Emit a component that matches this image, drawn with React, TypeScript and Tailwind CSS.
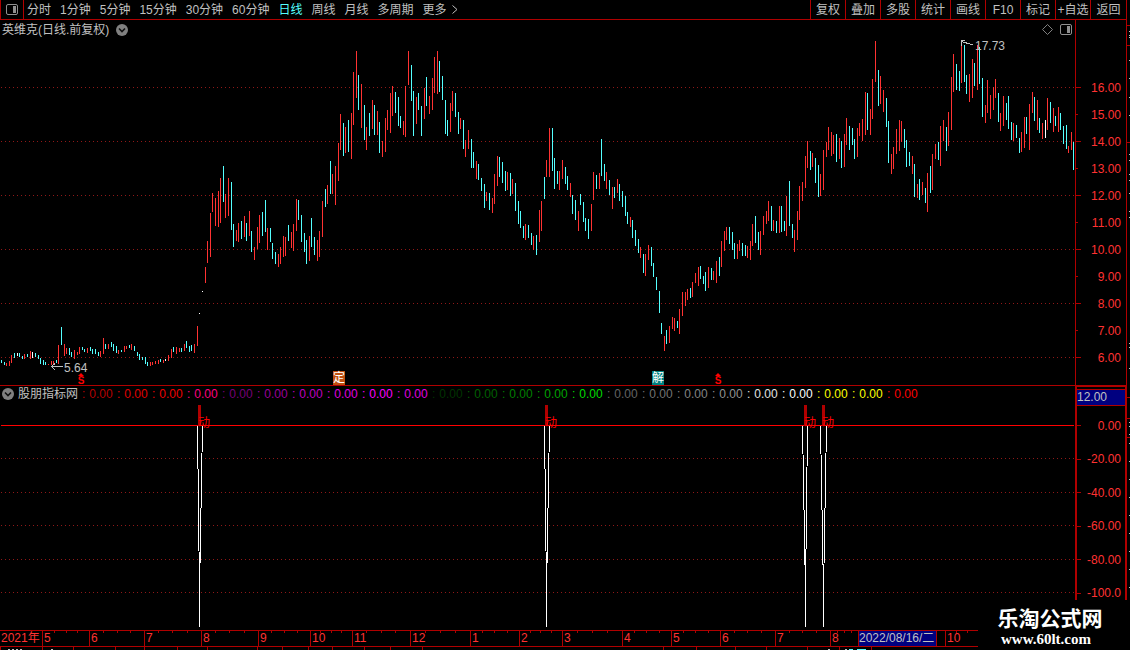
const periods = ['分时', '1分钟', '5分钟', '15分钟', '30分钟', '60分钟', '日线', '周线', '月线', '多周期', '更多']
const actions = ['复权', '叠加', '多股', '统计', '画线', 'F10', '标记', '+自选', '返回']

// x, kind (r = up, c = down, w = flat), high-low in canvas units
const bars = `
1c360-363 4c362-365 6r363-366 9r361-366 11r355-363 14c353-358 17w353-356 19c353-357 22c356-359 24r354-359
27c354-357 30r351-359 32w352-358 35c353-357 38c355-359 40c358-364 43c360-365 45c362-365 48r364-365 51r361-365
53r361-365 56c360-363 58r345-364 61c327-345 64r344-356 66r348-354 69c348-355 71c352-357 74r350-359 77r352-355
79r347-354 82c347-350 84c349-352 87r348-353 90c347-351 92c349-354 95c349-354 98c352-356 100r351-357 103r338-354
105c344-349 108r344-349 111c342-347 113c344-351 116c346-353 118r350-354 121c350-352 124r346-352 126r346-349
129c345-348 131r344-350 134c346-351 137c352-356 139c354-360 142c357-360 145c357-364 147c362-366 150r362-366
152r362-365 155r361-364 158r360-364 160c359-362 163r360-363 165w359-361 168r355-361 171r349-358 173c347-352
176r347-354 179r348-352 181c348-352 184r344-351 186c341-348 189c346-352 191c345-351 194r344-353 197r326-346
199w313-314 202w291-292 205r267-283 207r241-263 210r213-257 212r193-212 215r198-226 218r191-227 220r178-223
223c166-202 225r194-218 228r178-216 231c182-230 233c224-247 236r230-241 238r223-242 241c221-239 244r216-237
246c223-241 249r211-236 251c231-252 254r247-260 257r227-249 259r215-243 262c212-236 265c200-232 267r228-250
270c228-242 272c243-259 275c252-264 278r254-267 280r247-264 283r236-257 285r237-256 288c225-241 291r232-248
293r224-251 296r199-231 298c200-220 301c215-242 304c233-252 306c240-264 309r236-261 311c218-247 314c237-255
317r240-261 319r231-257 322r201-237 325c189-207 327r185-204 330c161-194 332r174-194 335r166-205 338r143-181
340r114-150 343c123-156 345r127-153 348c120-152 351r113-159 353r72-125 356r51-98 358c75-110 361r84-128
364c105-140 366r127-150 369c113-136 372r100-129 374c105-135 377r111-135 379c122-153 382r141-157 385r118-152
387r110-130 390r93-133 392r86-116 395c92-113 398c97-126 400c116-128 403r121-135 405r86-137 408r51-85
411c65-101 413c91-136 416r97-124 418c93-110 421c106-136 424r88-119 426c77-106 429r96-114 432r78-110
434r57-93 437r51-94 439c61-92 442c76-100 445c100-134 447c120-136 450r103-132 452r91-111 455c93-117
458c112-134 460r118-129 463c120-149 465r140-157 468r130-149 471c139-168 473c152-168 476r161-179 478c164-180
481c178-191 484c184-208 486r192-201 489c193-210 492r198-213 494r174-204 497r156-186 499c157-177 502c162-183
505c171-191 507r172-190 510c173-196 512r179-194 515c183-211 518c201-224 520c211-228 523c226-238 525r224-240
528c225-238 531c233-245 533r236-250 536c235-255 539r210-242 541r201-231 544c177-199 546r160-177 549r128-177
552c128-171 554c158-189 557c171-184 559r171-190 562r160-179 565c167-184 567c176-190 570r183-197 572c195-214
575c200-220 578r211-231 580c194-205 583c202-222 585c218-231 588c219-239 591r204-231 593r172-200 596c175-189
599r173-189 601c139-176 604c164-181 606r172-189 609c180-195 612r187-209 614c187-198 617r179-193 619c184-201
622c191-207 625c196-216 627c212-224 630r217-227 632c220-238 635c230-246 638c239-253 640r247-258 643c254-273
645r254-276 648r245-260 651c247-266 653c263-277 656c277-290 659c291-313 661c323-334 664r336-351 666c330-344
669r326-343 672r317-329 674r318-331 677c321-328 679r309-334 682r292-316 685r292-306 687r289-300 690c288-298
692r282-297 695r273-283 698r267-286 700c266-279 703c276-284 705c272-291 708r267-288 711c268-280 713r271-280
716r261-283 719c257-276 721r241-267 724r231-251 726r227-240 729c227-244 732c232-250 734c243-259 737r244-259
739r240-251 742c243-256 745c245-256 747r246-258 750r241-260 752r224-246 755c216-243 758c232-250 760r231-255
763r216-235 766r211-224 768r201-221 771c206-231 773r220-231 776c221-233 779r206-233 781c206-232 784c221-231
786r196-236 789c181-226 792c224-238 794r230-252 797r211-240 799r186-220 802r182-201 805r156-188 807r141-168
810c151-170 812r153-167 815c158-183 818c165-197 820r174-196 823r150-190 826r142-157 828r127-150 831r132-156
833r135-154 836c134-162 839r138-159 841c141-168 844r134-167 846r118-145 849c126-150 852c128-145 854c139-159
857r128-157 859r123-136 862r119-141 865r92-135 867c93-130 870r109-135 872r79-119 875r41-82 878c70-106
880r76-104 883r90-112 886c98-127 888c121-163 891r154-174 893r147-169 896r129-154 899r120-151 901r121-142
904c129-148 906c140-167 909c152-166 912r156-174 914c164-197 917r184-198 919c179-200 922r182-195 925c188-203
927r173-212 930c166-193 932r154-190 935r144-159 938c142-160 940r126-166 943r120-141 946c127-151 948r112-146
951r77-130 953r54-92 956c64-90 959c71-91 961r41-83 964c45-82 966c75-94 969r74-102 972r59-98 974c63-86
977r45-90 979c47-84 982c78-117 985r105-123 987r80-113 990r95-119 993r87-110 995r79-98 998c93-122 1000r113-131
1003r96-126 1006c103-120 1008c96-129 1011c122-140 1013r123-141 1016c125-138 1019c138-153 1021r132-152
1024r117-148 1026c117-134 1029r104-150 1032r92-113 1034c97-121 1037r100-130 1039c118-133 1042r123-139
1045w120-138 1047r98-130 1050c102-123 1053r108-132 1055c116-126 1058r107-132 1060c113-130 1063c126-144
1066c125-149 1068r146-153 1071r132-150 1073c142-170`
  .trim()
  .split(/\s+/)
  .map((s) => {
    const [, x, kind, high, low] = s.match(/(\d+)([rcw])(\d+)-(\d+)/)!
    return { x: +x, kind, high: +high, low: +low }
  })

const barFill: Record<string, string> = { r: '#ff3232', c: '#54ffff', w: '#ffffff' }

const prices = ['16.00', '15.00', '14.00', '13.00', '12.00', '11.00', '10.00', '9.00', '8.00', '7.00', '6.00']
const levels = ['0.00', '-20.00', '-40.00', '-60.00', '-80.00', '-100.0']

const valueColors = [
  '#b80000', '#e00000', '#f00000', '#ff0080', '#780078', '#9c009c', '#c000c0', '#e000e0',
  '#ff00ff', '#e000e0', '#003400', '#006000', '#008000', '#00a400', '#00dc00', '#646464',
  '#747474', '#848484', '#949494', '#e4e4e4', '#ffffff', '#ffff00', '#ffff00', '#ff0000',
]

// left / right leg and tip of every spike
const signals = [
  { left: 197, right: 202, tip: 199 },
  { left: 544, right: 549, tip: 546 },
  { left: 802, right: 807, tip: 805 },
  { left: 820, right: 826, tip: 823 },
]

const months = [
  { label: '2021年', span: 42 },
  { label: '5', span: 47 },
  { label: '6', span: 55 },
  { label: '7', span: 57 },
  { label: '8', span: 57 },
  { label: '9', span: 52 },
  { label: '10', span: 42 },
  { label: '11', span: 58 },
  { label: '12', span: 60 },
  { label: '1', span: 49 },
  { label: '2', span: 43 },
  { label: '3', span: 60 },
  { label: '4', span: 49 },
  { label: '5', span: 49 },
  { label: '6', span: 55 },
  { label: '7', span: 55 },
  { label: '8', span: 28 },
  { label: '2022/08/16/二', span: 87 },
  { label: '10', span: 44 },
  { label: '', span: 137 },
]
const totalSpan = months.reduce((sum, m) => sum + m.span, 0)

const pos = (x: number, y: number, h: number) => ({
  left: `${(x / 1075) * 100}%`,
  top: `${(y / h) * 100}%`,
})

function PanelIcon() {
  return (
    <svg width="12" height="11" viewBox="0 0 12 11" fill="none">
      <rect x="0.5" y="0.5" width="11" height="10" rx="1.5" stroke="#909090" />
      <rect x="7" y="2" width="3" height="7" fill="#909090" />
    </svg>
  )
}

function RoundArrow() {
  return (
    <svg width="12" height="12" viewBox="0 0 12 12" fill="none">
      <circle cx="6" cy="6" r="6" fill="#808080" />
      <path d="M3 4.5 L6 7.5 L9 4.5" stroke="#101010" strokeWidth="1.6" />
    </svg>
  )
}

function SellMark({ x }: { x: number }) {
  return (
    <div className="absolute flex w-2 flex-col items-center" style={pos(x, 353, 365)}>
      <svg width="6" height="3" viewBox="0 0 6 3" fill="#ff0000">
        <path d="M3 0 L6 3 H0 Z" />
      </svg>
      <span className="text-[10px] leading-[9px] font-bold text-[#ff0000]">S</span>
    </div>
  )
}

function Toolbar() {
  return (
    <header className="flex h-5 shrink-0 border-b border-[#b00000]">
      <button aria-label="panel" className="flex w-6 shrink-0 items-center justify-center border-x border-[#b00000]">
        <PanelIcon />
      </button>
      <nav className="flex items-center gap-[9px] pl-[3px] whitespace-nowrap">
        {periods.map((p) => (
          <button key={p} className={p === '日线' ? 'text-[#54ffff]' : ''}>
            {p}
          </button>
        ))}
        <svg width="6" height="9" viewBox="0 0 6 9" fill="none" stroke="#c0c0c0" className="-ml-1">
          <path d="M0.5 0.5 L5 4.5 L0.5 8.5" />
        </svg>
      </nav>
      <div className="ml-auto flex whitespace-nowrap">
        {actions.map((a) => (
          <button key={a} className="w-[35px] border-l border-[#b00000] text-center last:w-9">
            {a}
          </button>
        ))}
      </div>
    </header>
  )
}

function PriceChart() {
  return (
    <section className="flex min-h-0 flex-[73]">
      <div className="relative min-w-0 flex-1">
        <svg
          className="absolute h-full w-full"
          viewBox="0 20 1075 365"
          preserveAspectRatio="none"
          shapeRendering="crispEdges"
        >
          {[87, 141, 195, 249, 303, 357].map((y) => (
            <line key={y} x1="1" x2="1075" y1={y + 0.5} y2={y + 0.5} stroke="#901818" strokeDasharray="1 3" />
          ))}
          {bars.map((b) => (
            <rect key={b.x} x={b.x} y={b.high} width="1" height={b.low - b.high} fill={barFill[b.kind]} />
          ))}
          <g stroke="#c0c0c0" fill="none">
            <path d="M51 366.5 H63 M51.5 366.5 L55 363.5 M51.5 366.5 L55 370" />
            <path d="M961.5 41.5 L973 45 M961.5 46 V40.5 H965" />
          </g>
        </svg>
        <div className="absolute top-0.5 left-0.5 flex items-center gap-[7px] leading-4">
          <h1>英维克(日线.前复权)</h1>
          <button aria-label="expand">
            <RoundArrow />
          </button>
        </div>
        <div className="absolute top-1 right-[3px] flex items-center gap-[7px]">
          <svg width="11" height="11" viewBox="0 0 11 11" fill="none" stroke="#808080">
            <path d="M5.5 0.5 L10.5 5.5 L5.5 10.5 L0.5 5.5 Z" />
          </svg>
          <PanelIcon />
        </div>
        <span className="absolute leading-3" style={pos(64, 342, 365)}>
          5.64
        </span>
        <span className="absolute leading-3" style={pos(975, 20, 365)}>
          17.73
        </span>
        <SellMark x={77} />
        <SellMark x={714} />
        <span className="absolute bg-[#c05010] leading-[14px] text-white" style={pos(333, 351, 365)}>
          定
        </span>
        <span className="absolute bg-[#008080] leading-[14px] text-white" style={pos(652, 351, 365)}>
          解
        </span>
      </div>
      <div className="flex w-[51px] shrink-0 flex-col border-l border-[#b00000] text-[#ff3232]">
        <div className="flex-[54]" />
        {prices.map((p, i) => (
          <div key={p} className="flex min-h-0 flex-[27] items-center justify-between pr-[5px]">
            <i className={i % 2 ? 'h-px w-0.5 bg-[#b00000]' : 'h-px w-[5px] bg-[#b00000]'} />
            {p}
          </div>
        ))}
        <div className="flex-[14]" />
      </div>
    </section>
  )
}

function IndicatorChart() {
  return (
    <section className="flex min-h-0 flex-[49]">
      <div className="relative min-w-0 flex-1 border-t border-[#b00000]">
        <svg
          className="absolute h-full w-full"
          viewBox="0 386 1075 244"
          preserveAspectRatio="none"
          shapeRendering="crispEdges"
        >
          {[458, 492, 525, 559, 592].map((y) => (
            <line key={y} x1="1" x2="1075" y1={y + 0.5} y2={y + 0.5} stroke="#901818" strokeDasharray="1 3" />
          ))}
          <rect x="1" y="425" width="1073" height="1" fill="#ff0000" />
          {signals.map((s) => (
            <g key={s.tip}>
              <rect x={s.tip - 1} y="405" width="3" height="21" fill="#b00000" />
              <path
                d={`M${s.left + 0.5} 426 L${s.tip + 0.5} 592 V627 M${s.right + 0.5} 426 L${s.tip + 0.5} 592`}
                stroke="#ffffff"
                fill="none"
              />
            </g>
          ))}
        </svg>
        {signals.map((s) => (
          <span key={s.tip} className="absolute leading-3 text-[#ff0000]" style={pos(s.tip - 1, 31, 244)}>
            动
          </span>
        ))}
        <div className="relative flex items-center pl-0.5 leading-4 whitespace-nowrap">
          <button aria-label="expand indicator">
            <RoundArrow />
          </button>
          <h2 className="w-[65px] shrink-0 pl-1">股朋指标网</h2>
          {valueColors.map((c, i) => (
            <span key={i} className="flex w-[35px] shrink-0 gap-1 pl-[3px]" style={{ color: c }}>
              <span>:</span>
              <span>0.00</span>
            </span>
          ))}
        </div>
      </div>
      <div className="flex w-[51px] shrink-0 flex-col border-t-2 border-r border-l-2 border-[#b00000] text-[#ff3232]">
        <div className="mt-0.5 mb-[3px] h-[17px] shrink-0 border-y border-[#b00000] bg-[#000080] leading-[15px] text-[#c0c0c0]">
          12.00
        </div>
        {levels.map((l) => (
          <div key={l} className="flex min-h-0 flex-[10] items-center justify-between pr-1">
            <i className="h-px w-1 bg-[#b00000]" />
            {l}
          </div>
        ))}
        <div className="flex-[6]" />
      </div>
    </section>
  )
}

function DateAxis() {
  return (
    <footer className="flex h-[17px] shrink-0 border-y border-[#b00000] leading-[15px] text-[#ff3232]">
      {months.map((m, i) => (
        <div
          key={i}
          className={
            m.label.length > 6
              ? 'shrink-0 border-l border-[#b00000] whitespace-nowrap text-[#c0c0c0]'
              : 'relative shrink-0 border-l border-[#b00000] whitespace-nowrap first:border-l-0'
          }
          style={{ width: `${(m.span / totalSpan) * 100}%` }}
        >
          <span className={m.label.length > 6 ? 'block w-[78px] border-r border-[#b00000] bg-[#000080]' : 'px-px'}>
            {m.label}
          </span>
          {m.label.length < 3 && m.label !== '' && (
            <div className="absolute inset-x-0 top-0 flex justify-evenly">
              <i className="h-0.5 w-px bg-[#b00000]" />
              <i className="h-0.5 w-px bg-[#b00000]" />
              <i className="h-0.5 w-px bg-[#b00000]" />
            </div>
          )}
        </div>
      ))}
    </footer>
  )
}

// clipped edges of the neighbouring windows
function BottomEdge() {
  const ticks = [0, 42, 73, 115, 144, 177, 207, 257, 282, 308, 332, 364, 390, 422, 663, 696, 735, 766, 807, 839, 871]
  return (
    <svg className="h-[3px] w-full shrink-0" viewBox="0 0 1126 3" preserveAspectRatio="none" shapeRendering="crispEdges">
      {ticks.map((x) => (
        <rect key={x} x={x} y="0" width="1" height="3" fill="#b00000" />
      ))}
      {[8, 12, 16, 20, 51, 828, 845].map((x) => (
        <rect key={x} x={x} y="2" width="2" height="1" fill="#c0c0c0" />
      ))}
      <rect x="849" y="2" width="4" height="1" fill="#54ffff" />
      <rect x="857" y="2" width="9" height="1" fill="#54ffff" />
    </svg>
  )
}

function RightEdge() {
  const marks = [31, 35, 37, 60, 78, 97, 115, 154, 160, 174, 180, 193, 211, 217, 343, 347, 368, 422, 426, 434, 443]
  const tail = [461, 479, 497, 515, 533, 551, 569, 587]
  return (
    <svg
      className="h-full w-1 shrink-0"
      viewBox="0 0 4 650"
      preserveAspectRatio="none"
      shapeRendering="crispEdges"
    >
      <rect width="1" height="650" fill="#b00000" />
      {[25, 45, 142, 397, 418, 437].map((y) => (
        <rect key={y} y={y} width="4" height="1" fill="#b00000" />
      ))}
      {[...marks, ...tail].map((y) => (
        <rect key={y} x="3" y={y} width="1" height="1" fill="#c0c0c0" />
      ))}
    </svg>
  )
}

export default function App() {
  return (
    <div className="relative flex h-screen overflow-hidden bg-black font-['Liberation_Sans','Noto_Sans_CJK_SC',sans-serif] text-xs text-[#c0c0c0]">
      <main className="flex min-w-0 flex-1 flex-col">
        <Toolbar />
        <PriceChart />
        <IndicatorChart />
        <DateAxis />
        <BottomEdge />
      </main>
      <RightEdge />
      <a
        href="#"
        className="absolute right-0 bottom-0 flex h-[50px] w-[152px] flex-col items-center bg-black pt-[7px] pr-4 text-white"
      >
        <span className="pl-2 text-[21px] leading-6 font-bold">乐淘公式网</span>
        <span className="font-['Liberation_Serif',serif] text-[15px] leading-4 font-bold">www.60lt.com</span>
      </a>
    </div>
  )
}
